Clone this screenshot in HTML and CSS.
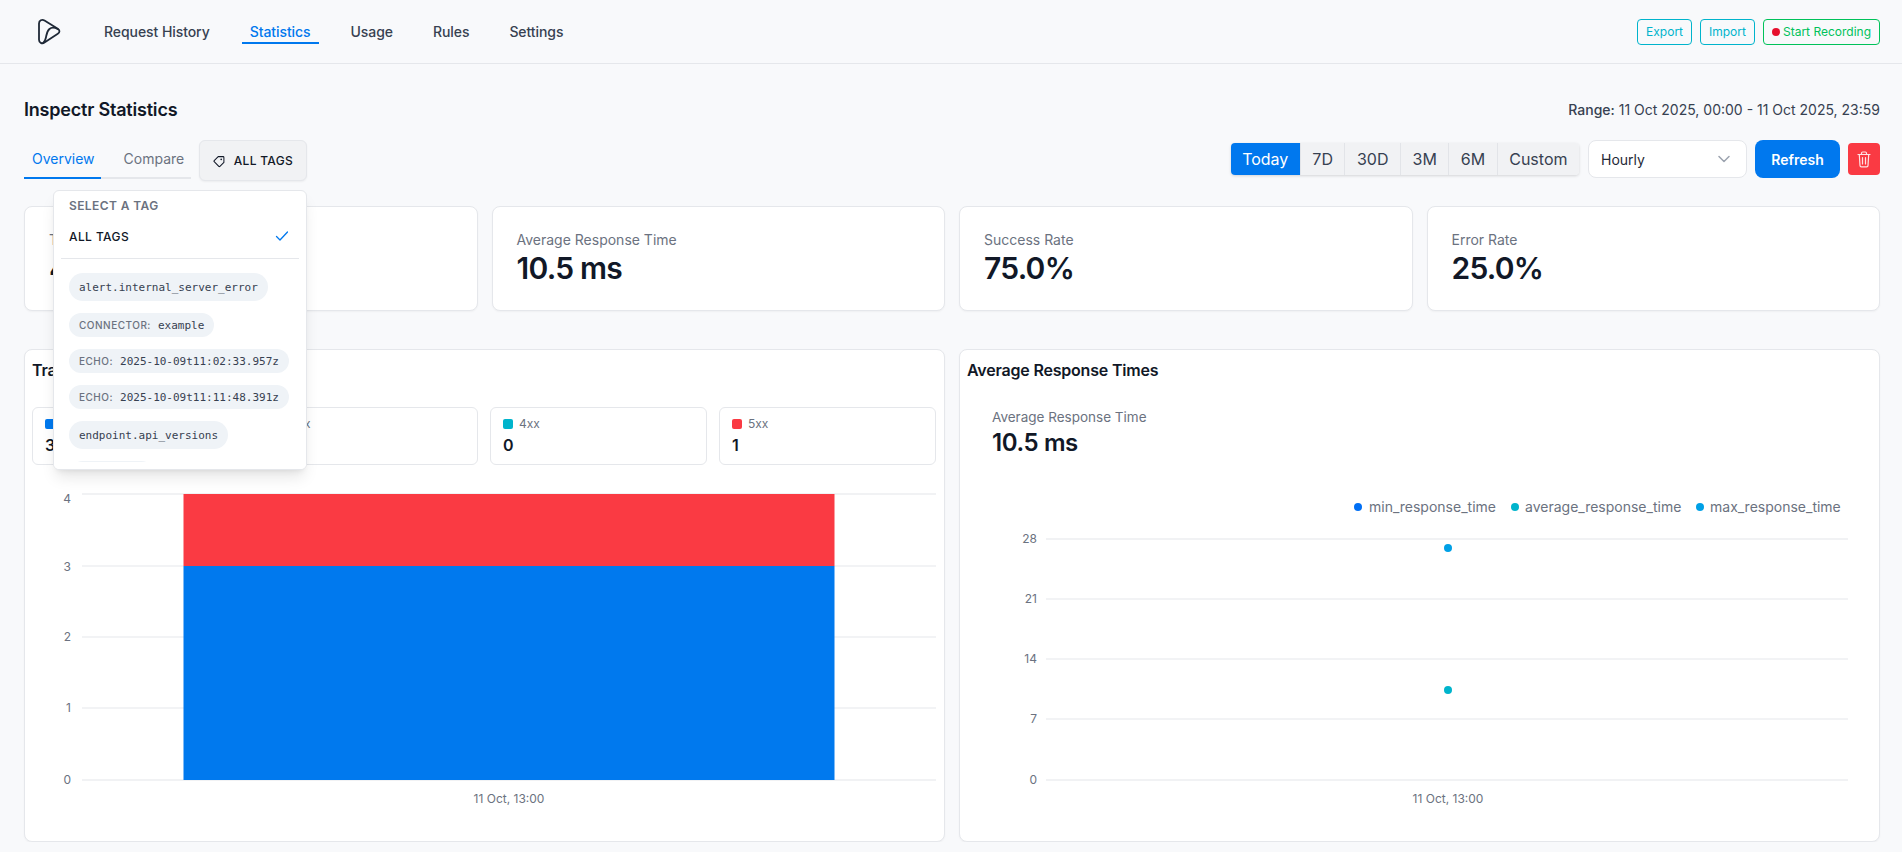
FILE: index.html
```html
<!DOCTYPE html>
<html lang="en">
<head>
    <meta charset="UTF-8">
    <meta name="viewport" content="width=device-width, initial-scale=1.0">
    <title>Inspectr Statistics</title>
    <link rel="stylesheet" href="styles.css">
</head>
<body>

<header class="topbar">
    <div class="topbar-left">
        <svg class="logo" width="24" height="26" viewBox="0 0 24 26" fill="none" stroke="#1f2937" stroke-width="1.800" stroke-linejoin="round" stroke-linecap="round">
            <path d="M2 4.500C2 1.500 5 0 7.500 1.600L20.800 9.800C23 11.200 23 13.400 20.800 14.800L7.500 23.600C5 25.200 2 23.700 2 20.700Z"/>
            <path d="M21 10.200C18 8.600 14.500 8.200 12.400 10C9.500 12.500 9.500 16.500 8.800 19C8.400 21 7.500 22.800 6.200 23.900"/>
        </svg>
        <nav class="nav">
            <a class="nav-link">Request History</a>
            <a class="nav-link active">Statistics</a>
            <a class="nav-link">Usage</a>
            <a class="nav-link">Rules</a>
            <a class="nav-link">Settings</a>
        </nav>
    </div>
    <div class="topbar-actions">
        <button class="outline-btn">Export</button>
        <button class="outline-btn">Import</button>
        <button class="outline-btn record"><span class="record-dot"></span>Start Recording</button>
    </div>
</header>

<main class="page">
    <div class="title-row">
        <h1>Inspectr Statistics</h1>
        <div class="range"><b>Range:</b> 11 Oct 2025, 00:00 - 11 Oct 2025, 23:59</div>
    </div>

    <div class="toolbar">
        <div class="toolbar-left">
            <div class="tabs">
                <a class="tab active">Overview</a>
                <a class="tab">Compare</a>
            </div>
            <div class="tag-picker">
                <button class="tag-btn">
                    <svg width="16" height="16" viewBox="0 0 16 16" fill="none" stroke="#111827" stroke-width="1.300" stroke-linejoin="round">
                        <path d="M1.500 7.500 6.500 2.500h6.200c.6 0 1 .4 1 1v6.300l-5 4.900c-.4.400-1 .4-1.400 0L1.500 8.900c-.4-.4-.4-1 0-1.400Z"/>
                        <circle cx="10.300" cy="6" r="1" fill="#111827" stroke="none"/>
                    </svg>
                    ALL TAGS
                </button>

                <!-- Tag dropdown, shown open -->
                <div class="tag-menu">
                    <div class="tag-menu-title">SELECT A TAG</div>
                    <div class="tag-menu-all">
                        ALL TAGS
                        <svg width="14" height="12" viewBox="0 0 14 12" fill="none" stroke="#0078ee" stroke-width="1.300" stroke-linecap="round" stroke-linejoin="round"><path d="M1.500 6.500 5 10l7.500-8"/></svg>
                    </div>
                    <div class="tag-menu-divider"></div>
                    <div class="tag-list">
                        <span class="pill">alert.internal_server_error</span>
                        <span class="pill small"><em>CONNECTOR:</em>example</span>
                        <span class="pill small"><em>ECHO:</em>2025-10-09t11:02:33.957z</span>
                        <span class="pill small"><em>ECHO:</em>2025-10-09t11:11:48.391z</span>
                        <span class="pill">endpoint.api_versions</span>
                        <span class="pill clipped"></span>
                    </div>
                </div>
            </div>
        </div>

        <div class="toolbar-right">
            <div class="segments">
                <button class="segment active">Today</button>
                <button class="segment">7D</button>
                <button class="segment">30D</button>
                <button class="segment">3M</button>
                <button class="segment">6M</button>
                <button class="segment">Custom</button>
            </div>
            <div class="select-box">
                Hourly
                <svg width="12" height="8" viewBox="0 0 12 8" fill="none" stroke="#9ca3af" stroke-width="1.500" stroke-linecap="round" stroke-linejoin="round"><path d="M1 1.500 6 6.500l5-5"/></svg>
            </div>
            <button class="refresh-btn">Refresh</button>
            <button class="trash-btn" aria-label="Delete">
                <svg width="14" height="17" viewBox="0 0 14 17" fill="none" stroke="#fff" stroke-opacity="0.85" stroke-width="1.200" stroke-linecap="round" stroke-linejoin="round">
                    <path d="M1 3.500h12M4.500 3.500V2.300c0-.7.500-1.300 1.200-1.300h2.600c.7 0 1.200.6 1.200 1.300v1.200M2.300 3.500l.7 11c0 .8.600 1.400 1.400 1.400h5.200c.8 0 1.400-.6 1.400-1.400l.7-11M5.500 6.500v6.500M8.500 6.500v6.500"/>
                </svg>
            </button>
        </div>
    </div>

    <section class="summary">
        <div class="card">
            <div class="card-label">Total Requests</div>
            <div class="card-value">4</div>
        </div>
        <div class="card">
            <div class="card-label">Average Response Time</div>
            <div class="card-value">10.5 ms</div>
        </div>
        <div class="card">
            <div class="card-label">Success Rate</div>
            <div class="card-value">75.0%</div>
        </div>
        <div class="card">
            <div class="card-label">Error Rate</div>
            <div class="card-value">25.0%</div>
        </div>
    </section>

    <section class="charts">
        <div class="chart-card">
            <h2>Traffic Overview</h2>
            <div class="status-grid">
                <div class="status-box">
                    <div class="status-label"><i class="swatch blue"></i>2xx</div>
                    <div class="status-value">3</div>
                </div>
                <div class="status-box">
                    <div class="status-label"><i class="swatch sky"></i>3xx</div>
                    <div class="status-value">0</div>
                </div>
                <div class="status-box">
                    <div class="status-label"><i class="swatch cyan"></i>4xx</div>
                    <div class="status-value">0</div>
                </div>
                <div class="status-box">
                    <div class="status-label"><i class="swatch red"></i>5xx</div>
                    <div class="status-value">1</div>
                </div>
            </div>

            <svg class="plot" width="902" height="360" viewBox="0 0 902 360">
                <line class="grid edge" x1="50" x2="904" y1="21" y2="21"/>
                <line class="grid" x1="50" x2="904" y1="93" y2="93"/>
                <line class="grid" x1="50" x2="904" y1="164" y2="164"/>
                <line class="grid" x1="50" x2="904" y1="235" y2="235"/>
                <line class="grid edge" x1="50" x2="904" y1="307" y2="307"/>
                <rect x="151.500" y="21" width="651" height="72" fill="#fa3a43"/>
                <rect x="151.500" y="93" width="651" height="214" fill="#0079ee"/>
                <text class="tick" x="39" y="30" text-anchor="end">4</text>
                <text class="tick" x="39" y="98" text-anchor="end">3</text>
                <text class="tick" x="39" y="168" text-anchor="end">2</text>
                <text class="tick" x="39" y="239" text-anchor="end">1</text>
                <text class="tick" x="39" y="311" text-anchor="end">0</text>
                <text class="tick" x="477" y="330" text-anchor="middle">11 Oct, 13:00</text>
            </svg>
        </div>

        <div class="chart-card">
            <h2>Average Response Times</h2>
            <div class="chart-stat">
                <div class="chart-stat-label">Average Response Time</div>
                <div class="chart-stat-value">10.5 ms</div>
            </div>

            <svg class="plot response" width="902" height="360" viewBox="0 0 902 360">
                <circle cx="389" cy="34" r="4" fill="#006ff5"/>
                <text class="legend" x="400" y="39">min_response_time</text>
                <circle cx="546" cy="34" r="4" fill="#00b4cc"/>
                <text class="legend" x="556" y="39">average_response_time</text>
                <circle cx="731" cy="34" r="4" fill="#00a0e6"/>
                <text class="legend" x="741" y="39">max_response_time</text>

                <line class="grid edge" x1="77" x2="879" y1="66" y2="66"/>
                <line class="grid" x1="77" x2="879" y1="126" y2="126"/>
                <line class="grid" x1="77" x2="879" y1="186" y2="186"/>
                <line class="grid" x1="77" x2="879" y1="246" y2="246"/>
                <line class="grid edge" x1="77" x2="879" y1="307" y2="307"/>

                <text class="tick" x="68" y="70" text-anchor="end">28</text>
                <text class="tick" x="68" y="130" text-anchor="end">21</text>
                <text class="tick" x="68" y="190" text-anchor="end">14</text>
                <text class="tick" x="68" y="250" text-anchor="end">7</text>
                <text class="tick" x="68" y="311" text-anchor="end">0</text>
                <text class="tick" x="479" y="330" text-anchor="middle">11 Oct, 13:00</text>

                <circle cx="479" cy="75" r="4" fill="#00a0e6"/>
                <circle cx="479" cy="217" r="4" fill="#00b4cc"/>
            </svg>
        </div>
    </section>
</main>

</body>
</html>
```

FILE: styles.css
```css
* {
    box-sizing: border-box;
}
body {
    font-family: Inter, "Noto Sans", sans-serif;
    background-color: #f8f9fb;
    color: #111827;
    margin: 0;
}
button {
    font-family: inherit;
    cursor: pointer;
}

/* Top bar */
.topbar {
    display: flex;
    align-items: center;
    justify-content: space-between;
    height: 64px;
    padding: 0 22px 0 37px;
    border-bottom: 1px solid #e5e7eb;
}
.topbar-left {
    display: flex;
    align-items: center;
}
.logo {
    display: block;
    margin-right: 35px;
}
.nav {
    display: flex;
    gap: 24px;
}
.nav-link {
    display: block;
    padding: 0 8px;
    height: 24px;
    line-height: 24px;
    font-size: 14px;
    font-weight: 500;
    letter-spacing: -0.07px;
    color: #374151;
}
.nav-link.active {
    color: #0078ee;
    border-bottom: 2px solid #0078ee;
}
.topbar-actions {
    display: flex;
    gap: 8px;
}
.outline-btn {
    height: 26px;
    padding: 0 8px;
    font-size: 12px;
    color: #00b4cc;
    background: transparent;
    border: 1px solid #00b4cc;
    border-radius: 4px;
}
.outline-btn.record {
    display: flex;
    align-items: center;
    color: #00c25a;
    border-color: #00c25a;
}
.record-dot {
    width: 8px;
    height: 8px;
    margin-right: 3px;
    border-radius: 50%;
    background-color: #e6102d;
}

/* Page */
.page {
    padding: 31px 22px 0 24px;
}
.title-row {
    display: flex;
    align-items: center;
    justify-content: space-between;
    height: 28px;
}
h1 {
    margin: 0;
    font-size: 18px;
    font-weight: 600;
    letter-spacing: -0.2px;
}
.range {
    font-size: 14px;
    color: #374151;
}
.range b {
    font-weight: 500;
}

.toolbar {
    display: flex;
    align-items: flex-start;
    justify-content: space-between;
    margin-top: 17px;
}
.toolbar-left {
    display: flex;
    align-items: flex-start;
}
.tabs {
    display: flex;
    width: 167px;
    height: 39px;
    border-bottom: 2px solid #e5e7eb;
}
.tab {
    height: 39px;
    padding: 0 8px;
    line-height: 37px;
    font-size: 14px;
    color: #6b7280;
}
.tab.active {
    padding: 0 6px 0 8px;
    margin-right: 15px;
    color: #0078ee;
    border-bottom: 2px solid #0078ee;
}
.tag-picker {
    position: relative;
    margin-left: 8px;
}
.tag-btn {
    display: flex;
    align-items: center;
    gap: 8px;
    width: 108px;
    height: 41px;
    padding: 0 13px;
    font-size: 12px;
    font-weight: 500;
    letter-spacing: 0.3px;
    white-space: nowrap;
    color: #111827;
    background-color: #f1f2f4;
    border: 1px solid #e5e7eb;
    border-radius: 6px;
    box-shadow: 0 1px 2px rgba(0, 0, 0, 0.05);
}

/* Tag dropdown */
.tag-menu {
    position: absolute;
    top: 50px;
    right: 0;
    width: 254px;
    height: 280px;
    padding-top: 7px;
    background-color: #fff;
    border: 1px solid #e5e7eb;
    border-radius: 6px;
    box-shadow: 0 10px 15px -3px rgba(0, 0, 0, 0.1), 0 4px 6px -4px rgba(0, 0, 0, 0.1);
    overflow: hidden;
    z-index: 10;
}
.tag-menu-title {
    padding: 0 15px;
    font-size: 12px;
    line-height: 16px;
    font-weight: 600;
    letter-spacing: 0.4px;
    color: #6b7280;
}
.tag-menu-all {
    display: flex;
    align-items: center;
    justify-content: space-between;
    height: 32px;
    margin-top: 6px;
    padding: 0 17px 0 15px;
    font-size: 12px;
    font-weight: 500;
    letter-spacing: 0.4px;
}
.tag-menu-divider {
    height: 1px;
    margin: 6px 7px 0;
    background-color: #e5e7eb;
}
.tag-list {
    display: flex;
    flex-direction: column;
    align-items: flex-start;
    gap: 12px;
    padding: 14px 15px 0;
}
.tag-menu::after {
    content: "";
    position: absolute;
    left: 0;
    right: 0;
    bottom: 0;
    height: 7px;
    background-color: #fff;
}
.pill {
    display: flex;
    align-items: center;
    flex-shrink: 0;
    height: 28px;
    padding: 0 10px;
    font-family: "DejaVu Sans Mono", "Liberation Mono", monospace;
    font-size: 11px;
    color: #374151;
    background-color: #eff3f7;
    border-radius: 14px;
    white-space: nowrap;
}
.pill.small {
    height: 24px;
}
.pill.clipped {
    width: 86px;
}
.pill em {
    margin-right: 7px;
    font-family: Inter, sans-serif;
    font-style: normal;
    font-size: 10px;
    font-weight: 500;
    letter-spacing: 0.5px;
    color: #6b7280;
}

.toolbar-right {
    display: flex;
    align-items: center;
    height: 38px;
}
.segments {
    display: flex;
    height: 32px;
    margin-right: 9px;
    border-radius: 4px;
    box-shadow: 0 1px 3px rgba(0, 0, 0, 0.15);
    overflow: hidden;
}
.segment {
    padding: 0 11.500px;
    font-size: 16px;
    color: #374151;
    background-color: #f1f2f4;
    border: none;
    border-right: 1px solid #e2e4e8;
}
.segment:last-child {
    border-right: none;
}
.segment.active {
    color: #fff;
    background-color: #0078ee;
}
.select-box {
    display: flex;
    align-items: center;
    justify-content: space-between;
    width: 159px;
    height: 38px;
    margin-right: 8px;
    padding: 0 16px 0 12px;
    font-size: 14px;
    color: #1f2937;
    background-color: #fff;
    border: 1px solid #e5e7eb;
    border-radius: 8px;
}
.refresh-btn {
    width: 85px;
    height: 38px;
    margin-right: 8px;
    font-size: 14px;
    font-weight: 600;
    color: #fff;
    background-color: #0078ee;
    border: none;
    border-radius: 8px;
}
.trash-btn {
    display: flex;
    align-items: center;
    justify-content: center;
    width: 32px;
    height: 32px;
    padding: 0;
    background-color: #fa3a43;
    border: none;
    border-radius: 4px;
}

/* Summary cards */
.summary {
    display: grid;
    grid-template-columns: repeat(4, 1fr);
    gap: 14px;
    margin-top: 25px;
}
.card {
    height: 105px;
    padding: 23px 24px;
    background-color: #fff;
    border: 1px solid #e5e7eb;
    border-radius: 8px;
    box-shadow: 0 1px 2px rgba(0, 0, 0, 0.04);
}
.card-label {
    font-size: 14px;
    line-height: 20px;
    color: #6b7280;
}
.card-value {
    font-size: 30px;
    line-height: 36px;
    font-weight: 600;
    letter-spacing: -0.75px;
}

/* Charts */
.charts {
    display: grid;
    grid-template-columns: repeat(2, 1fr);
    gap: 14px;
    margin-top: 38px;
}
.chart-card {
    min-width: 0;
    height: 493px;
    padding: 8px 8px 8px 7px;
    background-color: #fff;
    border: 1px solid #e5e7eb;
    border-radius: 8px;
    box-shadow: 0 1px 2px rgba(0, 0, 0, 0.04);
}
h2 {
    margin: 0;
    font-size: 16px;
    line-height: 24px;
    font-weight: 600;
    letter-spacing: -0.2px;
}
.status-grid {
    display: grid;
    grid-template-columns: repeat(4, 1fr);
    gap: 12px;
    margin-top: 25px;
}
.status-box {
    height: 58px;
    padding: 8px 12px 6px;
    border: 1px solid #e5e7eb;
    border-radius: 6px;
}
.status-label {
    display: flex;
    align-items: center;
    gap: 6px;
    font-size: 12px;
    line-height: 16px;
    color: #6b7280;
}
.swatch {
    width: 10px;
    height: 10px;
    border-radius: 2px;
}
.swatch.blue {
    background-color: #0079ee;
}
.swatch.sky {
    background-color: #00a0e6;
}
.swatch.cyan {
    background-color: #00b4cc;
}
.swatch.red {
    background-color: #fa3a43;
}
.status-value {
    font-size: 16px;
    line-height: 26px;
    font-weight: 600;
}
.plot {
    display: block;
    margin-top: 8px;
    overflow: visible;
}
.chart-stat {
    margin-top: 25px;
    padding-left: 25px;
}
.chart-stat-label {
    font-size: 13.500px;
    line-height: 20px;
    color: #6b7280;
}
.chart-stat-value {
    font-size: 24px;
    line-height: 32px;
    font-weight: 600;
    letter-spacing: -0.4px;
}
.plot.response {
    margin: 14px 0 0 2px;
}
.grid {
    stroke: #e5e7eb;
    stroke-width: 1;
}
.grid.edge {
    stroke: #f1f2f4;
    stroke-width: 2;
}
.tick {
    font-size: 12px;
    fill: #6b7280;
}
.legend {
    font-size: 14px;
    fill: #6b7280;
}
```
